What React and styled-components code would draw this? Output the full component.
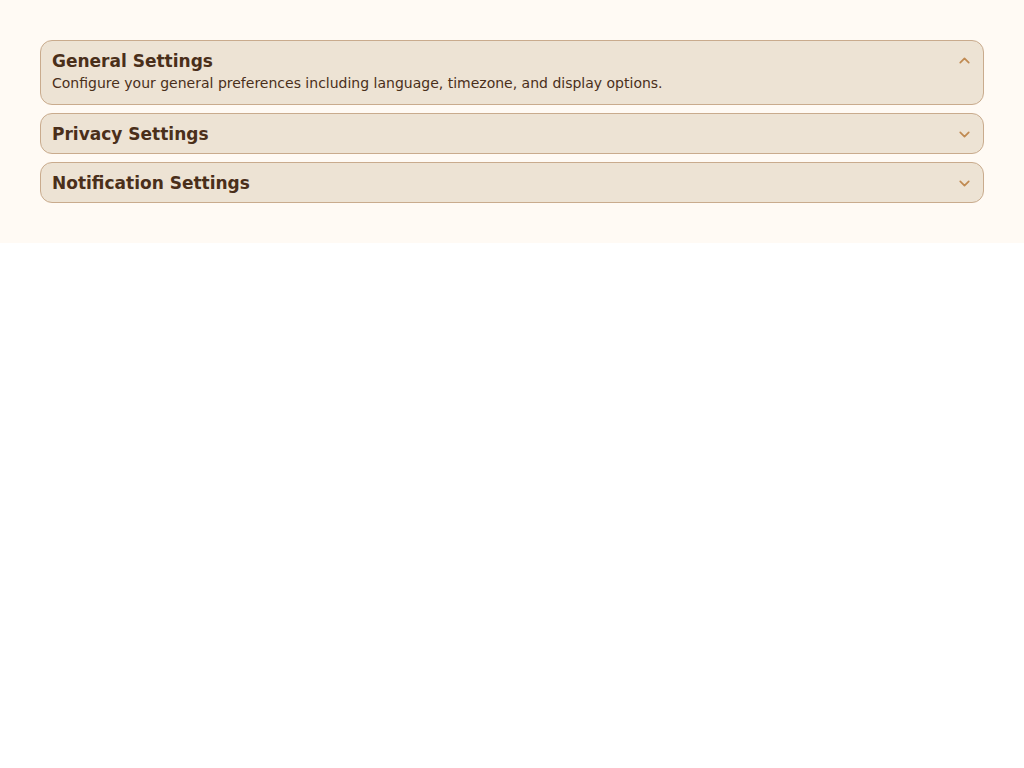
import React, { useState } from "react";
import styled, { createGlobalStyle } from "styled-components";

const Global = createGlobalStyle`
  html, body { margin: 0; padding: 0; background: #ffffff; }
  body { font-family: "DejaVu Sans", sans-serif; }
`;

const Page = styled.div`
  background: #fffaf4;
  padding: 40px;
  display: flex;
  flex-direction: column;
  gap: 8px;
`;

const Card = styled.div`
  background: #ede3d4;
  border: 1px solid #c9ab8d;
  border-radius: 12px;
`;

const Header = styled.button`
  all: unset;
  box-sizing: border-box;
  width: 100%;
  display: flex;
  align-items: center;
  justify-content: space-between;
  padding: 9px 10px 7px 11px;
  cursor: pointer;
`;

const Title = styled.span`
  font-family: "DejaVu Sans", sans-serif;
  font-weight: bold;
  font-size: 17px;
  line-height: 23px;
  color: #4a2f1a;
`;

const Content = styled.div`
  margin-top: -5px;
  padding: 0 11px 13px;
  font-family: "DejaVu Sans", sans-serif;
  font-size: 14px;
  line-height: 16px;
  color: #4a2f1a;
`;

const Chevron = styled.svg`
  width: 17px;
  height: 17px;
  margin-top: ${(p) => (p.$open ? "-2px" : "-1px")};
  color: #c08a52;
  transform: ${(p) => (p.$open ? "rotate(180deg)" : "none")};
`;

const items = [
  {
    title: "General Settings",
    body: "Configure your general preferences including language, timezone, and display options.",
  },
  { title: "Privacy Settings", body: "Manage who can see your information and activity." },
  { title: "Notification Settings", body: "Choose how and when you receive notifications." },
];

export default function App() {
  const [open, setOpen] = useState(0);
  return (
    <>
      <Global />
      <Page>
        {items.map((it, i) => (
          <Card key={it.title}>
            <Header onClick={() => setOpen(open === i ? -1 : i)}>
              <Title>{it.title}</Title>
              <Chevron $open={open === i} viewBox="0 0 24 24" fill="none" stroke="currentColor" strokeWidth="2.4" strokeLinecap="round" strokeLinejoin="round">
                <path d="m6 9 6 6 6-6" />
              </Chevron>
            </Header>
            {open === i && <Content>{it.body}</Content>}
          </Card>
        ))}
      </Page>
    </>
  );
}
